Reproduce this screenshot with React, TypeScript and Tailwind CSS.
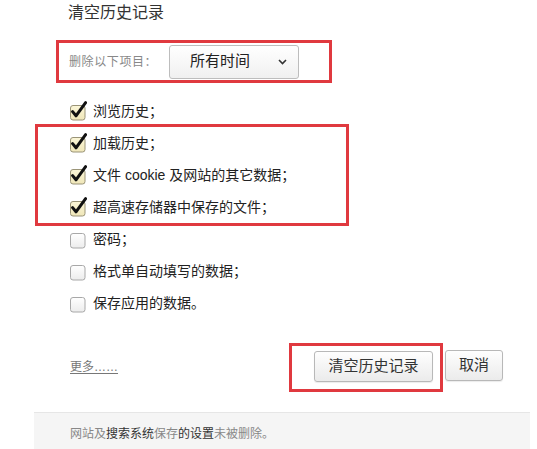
import React from "react";

const checked = ["加载历史；", "文件 cookie 及网站的其它数据；", "超高速存储器中保存的文件；"];
const unchecked = ["密码；", "格式单自动填写的数据；", "保存应用的数据。"];

const CheckBox: React.FC<{ on: boolean }> = ({ on }) => (
  <svg width="18" height="20" viewBox="0 0 18 20" className="shrink-0 -ml-[1px]">
    <defs>
      <linearGradient id={on ? "cbOn" : "cbOff"} x1="0" y1="0" x2="0" y2="1">
        <stop offset="0" stopColor={on ? "#fbf6d8" : "#ffffff"} />
        <stop offset="1" stopColor={on ? "#efe6b8" : "#ececec"} />
      </linearGradient>
    </defs>
    <rect
      x="1.5"
      y="4.5"
      width="14.5"
      height="14.5"
      rx="2.5"
      fill={`url(#${on ? "cbOn" : "cbOff"})`}
      stroke={on ? "#9a9478" : "#a8a8a8"}
      strokeWidth="1"
    />
    {on && (
      <path
        d="M3.6 10.6 L7 14.8 L16.6 1.6"
        fill="none"
        stroke="#111"
        strokeWidth="3"
        strokeLinecap="round"
        strokeLinejoin="round"
      />
    )}
  </svg>
);

const Row: React.FC<{ label: string; on: boolean }> = ({ label, on }) => (
  <div className="flex h-[32px] items-center gap-[6px]">
    <CheckBox on={on} />
    <span className="text-[14px] leading-[18px] text-[#222]">{label}</span>
  </div>
);

const btn =
  "h-[31px] rounded-[3px] border border-[#b8b8b8] bg-gradient-to-b from-[#fefefe] to-[#ebebeb] text-[15px] text-[#333] shadow-[0_1px_1px_rgba(0,0,0,0.08)]";

export default function App() {
  return (
    <div
      className="relative h-[449px] w-[537px] overflow-hidden bg-white"
      style={{ fontFamily: '"Liberation Sans", "Noto Sans CJK SC", sans-serif' }}
    >
      <h1 className="pl-[68px] pt-[3px] text-[16px] font-normal leading-[20px] text-[#333]">清空历史记录</h1>

      <div className="ml-[56px] mt-[17px] flex h-[43px] w-[276px] items-center border-[3px] border-[#e0393f] pl-[10px]">
        <span className="w-[100px] shrink-0 text-[12px] tracking-[0.6px] text-[#888]">删除以下项目：</span>
        <button className="flex h-[34px] w-[130px] items-center justify-between rounded-[3px] border border-[#bdbdbd] bg-gradient-to-b from-white to-[#f0f0f0] pl-[20px] pr-[11px] text-[15px] text-[#222]">
          <span>所有时间</span>
          <svg width="9" height="6" viewBox="0 0 9 6">
            <path d="M1 1 L4.5 4.5 L8 1" fill="none" stroke="#333" strokeWidth="1.6" />
          </svg>
        </button>
      </div>

      <div className="mt-[12px]">
        <div className="pl-[70px]">
          <Row label="浏览历史；" on />
        </div>
        <div className="relative z-10 ml-[35px] -my-[3px] w-[314px] border-[3px] border-[#e0393f] pl-[32px]">
          {checked.map((t) => (
            <Row key={t} label={t} on />
          ))}
        </div>
        <div className="pl-[70px]">
          {unchecked.map((t) => (
            <Row key={t} label={t} on={false} />
          ))}
        </div>
      </div>

      <div className="mt-[24px] flex items-center pl-[70px]">
        <a className="mt-[-2px] text-[12px] text-[#777] underline underline-offset-2">更多……</a>
        <div className="ml-auto flex items-center pr-[34px]">
          <div className="flex h-[49px] w-[154px] items-center border-[3px] border-[#e0393f] pl-[22px]">
            <button className={`${btn} w-[119px] -mt-[2px]`}>清空历史记录</button>
          </div>
          <button className={`${btn} ml-[2px] -mt-[4px] w-[58px]`}>取消</button>
        </div>
      </div>

      <div className="ml-[34px] mt-[20px] h-[40px] w-[496px] border-t border-[#e6e6e6] bg-[#f5f5f5] pl-[36px] pt-[13px] text-[12px] leading-[16px] text-[#888]">
        网站及<span className="text-[#333]">搜索系统</span>保存<span className="text-[#333]">的设置</span>未被删除。
      </div>
    </div>
  );
}
